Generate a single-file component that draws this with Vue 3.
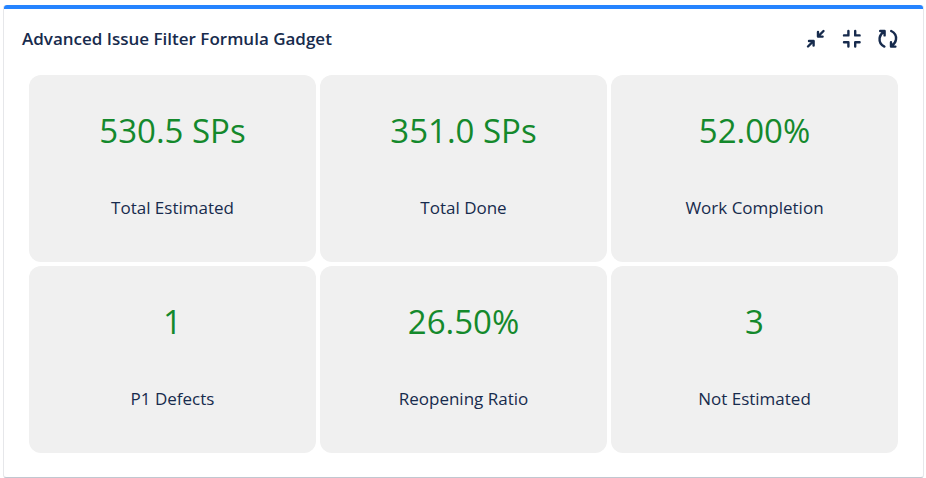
<script setup>
const metrics = [
  { value: '530.5 SPs', label: 'Total Estimated' },
  { value: '351.0 SPs', label: 'Total Done' },
  { value: '52.00%', label: 'Work Completion' },
  { value: '1', label: 'P1 Defects' },
  { value: '26.50%', label: 'Reopening Ratio' },
  { value: '3', label: 'Not Estimated' },
]
</script>

<template>
  <section class="gadget">
    <header class="header">
      <h1 class="title">Advanced Issue Filter Formula Gadget</h1>
      <div class="actions">
        <button type="button" class="action" aria-label="Minimize">
          <svg viewBox="0 0 24 24" aria-hidden="true">
            <path class="line" d="M4 19.5L9 14.5M19.5 4L14.5 9" />
            <path class="line" d="M5 14H9.6V18.6M14 5V9.6H18.6" />
            <path class="fill" d="M6 14H10V18ZM14 6V10H18Z" />
          </svg>
        </button>
        <button type="button" class="action" aria-label="Exit full screen">
          <svg viewBox="0 0 24 24" aria-hidden="true">
            <path class="line" d="M8.4 4V8.4H4M15.2 4V8.4H19.6M8.4 19.6V15.2H4M15.2 19.6V15.2H19.6" />
          </svg>
        </button>
        <button type="button" class="action" aria-label="Refresh">
          <svg viewBox="0 0 24 24" aria-hidden="true">
            <path class="line" d="M8.4 19.6C5 18 3.2 14.8 3.6 11.2C3.9 8.6 5.6 6.3 8 4.6M4.2 4H8.6V8.4" />
            <path class="line" d="M15.2 4C18.6 5.6 20.4 8.8 20 12.4C19.7 15 18 17.3 15.6 19M19.4 19.6H15V15.2" />
            <path class="fill" d="M5 4H8.6V7.6ZM18.6 19.6H15V16Z" />
          </svg>
        </button>
      </div>
    </header>
    <div class="grid">
      <article v-for="metric in metrics" :key="metric.label" class="tile">
        <p class="value">{{ metric.value }}</p>
        <p class="label">{{ metric.label }}</p>
      </article>
    </div>
  </section>
</template>

<style>
body {
  background: #fff;
}
</style>

<style scoped>
.gadget {
  margin: 5px 2px 0 3px;
  border: 1px solid #e6e7ea;
  border-top: 0;
  border-bottom-color: #c1c7d0;
  border-radius: 3px;
  background: #fff;
  color: #172b4d;
  font-family: "Segoe UI", "Open Sans", "Noto Sans", sans-serif;
}
.gadget::before {
  content: "";
  display: block;
  height: 4px;
  border-radius: 3px 3px 0 0;
  background: #2684ff;
}
.header {
  display: flex;
  align-items: center;
  justify-content: space-between;
  padding: 18px 23px 0 18px;
}
.title {
  margin: 0;
  font-size: 17px;
  font-weight: 600;
  line-height: 24px;
}
.actions {
  display: flex;
  gap: 12px;
}
.action {
  width: 24px;
  height: 24px;
  padding: 0;
  border: 0;
  background: none;
  color: inherit;
  cursor: pointer;
}
.action svg {
  display: block;
  width: 24px;
  height: 24px;
}
.line {
  fill: none;
  stroke: currentColor;
  stroke-width: 2.4;
  stroke-linecap: round;
  stroke-linejoin: round;
}
.fill {
  fill: currentColor;
}
.grid {
  display: grid;
  grid-template-columns: repeat(3, 1fr);
  gap: 4px;
  padding: 24px 25px;
}
.tile {
  padding: 32px 16px 42px;
  border-radius: 12px;
  background: #f0f0f0;
  text-align: center;
}
.value {
  margin: 0 0 41px;
  color: #14892c;
  font-size: 33px;
  font-weight: 400;
  line-height: 48px;
}
.label {
  margin: 0;
  font-size: 17px;
  font-weight: 400;
  line-height: 24px;
}
</style>
